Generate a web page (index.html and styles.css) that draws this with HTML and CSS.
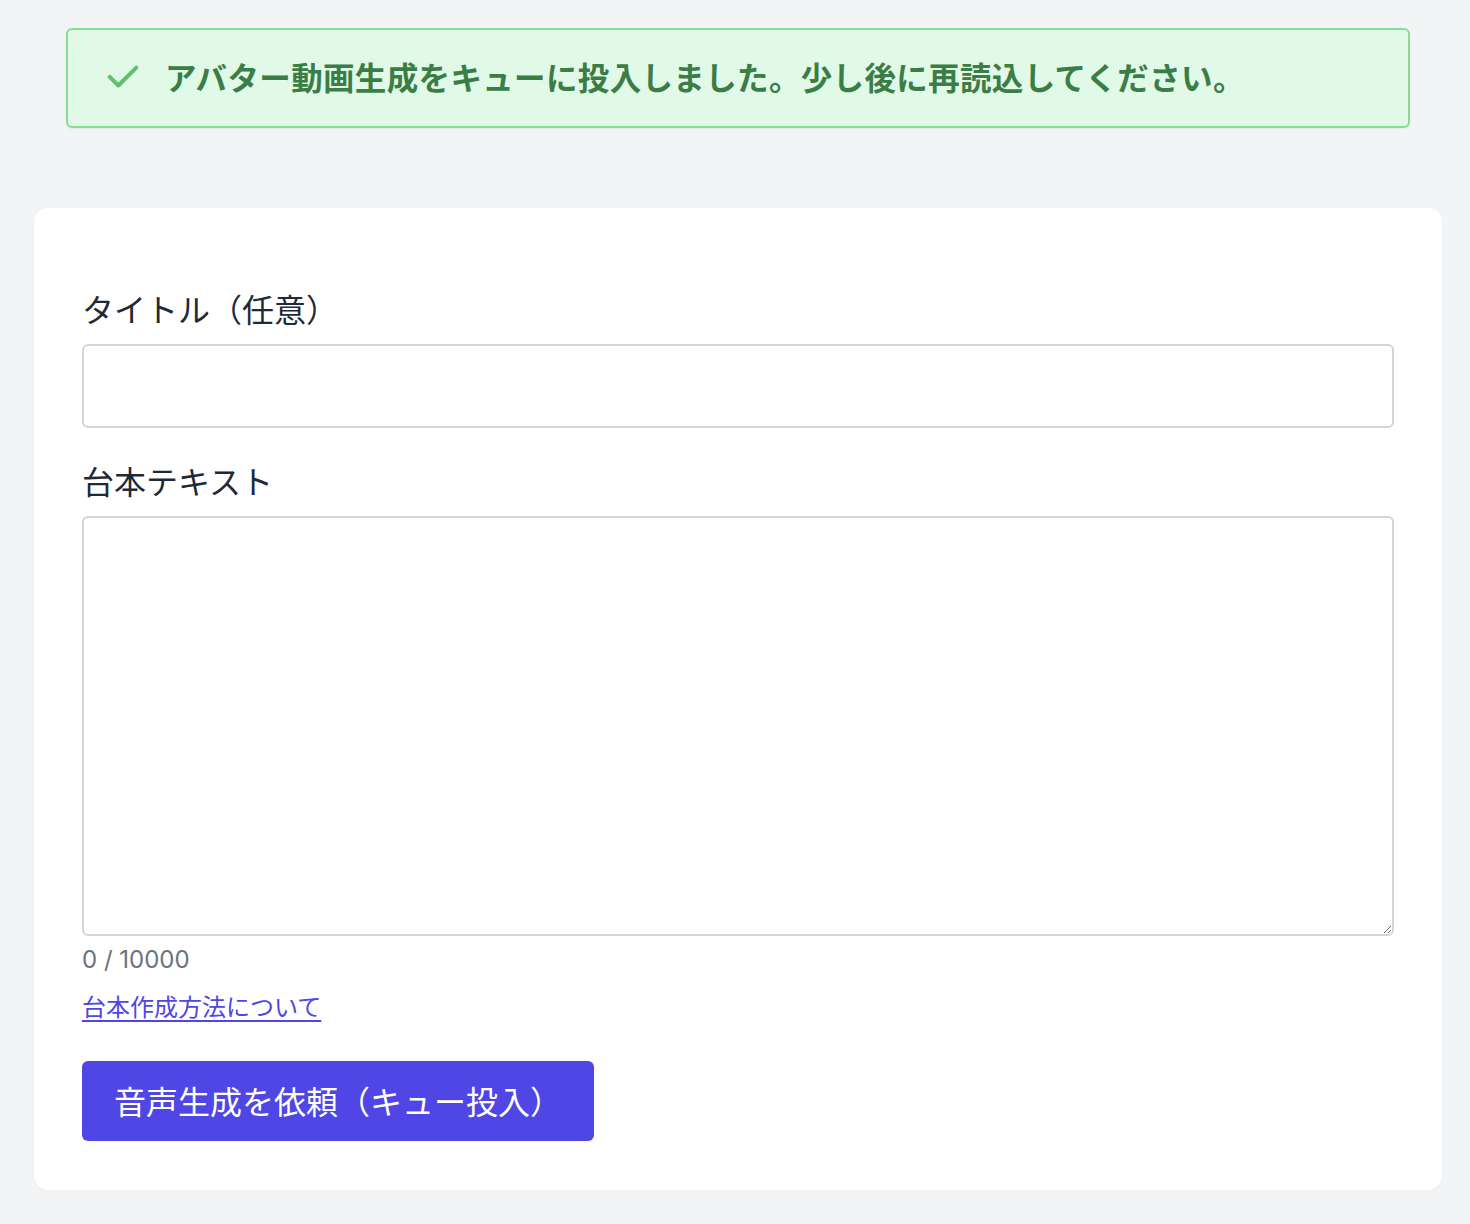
FILE: index.html
```html
<!DOCTYPE html>
<html lang="ja">
<head>
<meta charset="utf-8">
<title>台本</title>
<link rel="stylesheet" href="styles.css">
</head>
<body>
<div class="page">
  <div class="alert">
    <svg class="alert-icon" viewBox="0 0 24 24" width="40" height="40" fill="none" stroke="currentColor" stroke-width="2.4" stroke-linecap="round" stroke-linejoin="round"><path d="M4 12.5l5.2 5.2L20 7"/></svg>
    <span class="alert-text">アバター動画生成をキューに投入しました。少し後に再読込してください。</span>
  </div>
  <div class="card">
    <form class="form">
      <label class="label" for="title">タイトル（任意）</label>
      <input class="input" id="title" type="text">
      <label class="label label-2" for="script">台本テキスト</label>
      <textarea class="textarea" id="script"></textarea>
      <div class="counter">0 / 10000</div>
      <a class="link" href="#">台本作成方法について</a>
      <button class="button" type="button">音声生成を依頼（キュー投入）</button>
    </form>
  </div>
</div>
</body>
</html>
```
FILE: styles.css
```css
* { box-sizing: border-box; }
html, body { margin: 0; padding: 0; }
body {
  background: #f3f4f6;
  font-family: Inter, "Noto Sans CJK JP", sans-serif;
  color: #111827;
}
.page {
  padding: 28px 28px 0 34px;
}
.alert {
  margin: 0 32px 0 32px;
  height: 100px;
  background: #e1f9e7;
  border: 2px solid #86de95;
  border-radius: 6px;
  display: flex;
  align-items: center;
  padding-left: 35px;
  padding-bottom: 4px;
  color: #3b7d46;
  box-shadow: 0 1px 2px rgba(0,0,0,0.06);
}
.alert-icon { color: #5ac46c; flex: none; margin-right: 22px; }
.alert-text {
  font-size: 31.5px;
  font-weight: 700;
  letter-spacing: 0.35px;
}
.card {
  margin-top: 80px;
  background: #fff;
  border-radius: 14px;
  padding: 79px 48px 49px 48px;
  box-shadow: 0 1px 2px rgba(0,0,0,0.05);
}
.form { display: flex; flex-direction: column; align-items: flex-start; }
.label {
  font-size: 32px;
  line-height: 48px;
  color: #1f2937;
  margin-bottom: 9px;
}
.label-2 { margin-top: 31px; }
.input {
  width: 100%;
  height: 84px;
  border: 2px solid #d1d5db;
  border-radius: 6px;
  background: #fff;
  font: inherit;
}
.textarea {
  width: 100%;
  height: 420px;
  border: 2px solid #d1d5db;
  border-radius: 6px;
  background: #fff;
  font: inherit;
  resize: vertical;
}
.counter {
  margin-top: 6px;
  font-size: 24px;
  line-height: 36px;
  color: #6b7280;
}
.link {
  margin-top: 12px;
  font-size: 24px;
  line-height: 36px;
  color: #4f46e5;
  text-decoration: underline;
  text-underline-offset: 4px;
}
.button {
  margin-top: 35px;
  height: 80px;
  width: 512px;
  background: #4f46e5;
  color: #fff;
  border: none;
  border-radius: 6px;
  font-family: inherit;
  font-size: 32px;
  padding: 0 32px 2px 32px;
  text-align: left;
}
```
